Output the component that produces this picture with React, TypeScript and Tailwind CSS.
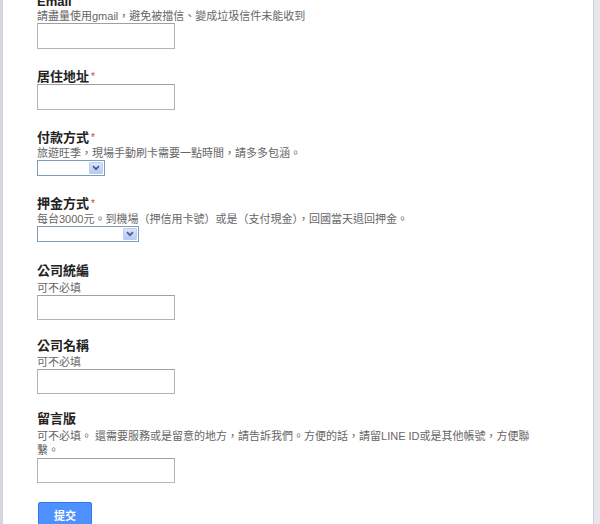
import React from 'react';

const FONT = { fontFamily: '"Liberation Sans", Arial, "Noto Sans CJK TC", sans-serif' };

interface FieldProps {
  label: string;
  required?: boolean;
  help?: string;
  top: string; // margin above the label
  helpTop?: string; // margin between label and help text
  children: React.ReactNode;
}

const Field: React.FC<FieldProps> = ({ label, required, help, top, helpTop = 'mt-[1px]', children }) => (
  <div className={top}>
    <div className="text-[13px] leading-[14px] font-bold text-[#222]">
      {label}
      {required && <span className="ml-[2px] text-[10px] font-normal text-[#c9452b] align-top">*</span>}
    </div>
    {help && <div className={`${helpTop} max-w-[498px] text-[11px] leading-[14px] text-[#666]`}>{help}</div>}
    {children}
  </div>
);

const TextBox = ({ h = 'h-[25px]' }: { h?: string }) => (
  <div className={`w-[138px] ${h} border border-[#b4b4b4] border-t-[#a0a0a0] bg-white`} />
);

const Select = ({ width }: { width: string }) => (
  <div className={`${width} h-[16px] border border-[#7f9db9] bg-white flex justify-end p-[1px]`}>
    <div className="w-[14px] h-full rounded-[1px] border border-[#bccdf3] bg-gradient-to-b from-[#dbe5fb] to-[#b7caf5] flex items-center justify-center">
      <svg width="8" height="6" viewBox="0 0 8 6">
        <path d="M1 1.2 L4 4.2 L7 1.2" fill="none" stroke="#4b5e86" strokeWidth="1.8" />
      </svg>
    </div>
  </div>
);

export default function App() {
  return (
    <div className="flex h-[524px] w-[600px] overflow-hidden bg-white" style={FONT}>
      <div className="w-[3px] shrink-0 bg-[#d6d6de]" />
      <div className="flex-1 pl-[34px]">
        <Field label="Email" help="請盡量使用gmail，避免被擋信、變成垃圾信件未能收到" top="-mt-[5px]" helpTop="mt-0">
          <TextBox h="h-[26px]" />
        </Field>

        <Field label="居住地址" required top="mt-[21px]">
          <TextBox h="h-[26px]" />
        </Field>

        <Field label="付款方式" required help="旅遊旺季，現場手動刷卡需要一點時間，請多多包涵。" top="mt-[21px]">
          <Select width="w-[68px]" />
        </Field>

        <Field label="押金方式" required help="每台3000元。到機場（押信用卡號）或是（支付現金），回國當天退回押金。" top="mt-[21px]">
          <Select width="w-[102px]" />
        </Field>

        <Field label="公司統編" help="可不必填" top="mt-[22px]" helpTop="mt-[3px]">
          <TextBox />
        </Field>

        <Field label="公司名稱" help="可不必填" top="mt-[19px]" helpTop="mt-[2px]">
          <TextBox />
        </Field>

        <Field label="留言版" help="可不必填。 還需要服務或是留意的地方，請告訴我們。方便的話，請留LINE ID或是其他帳號，方便聯繫。" top="mt-[18px]" helpTop="mt-[3px]">
          <div className="mt-[1px]">
            <TextBox />
          </div>
        </Field>

        <button className="mt-[19px] ml-[1px] w-[54px] h-[28px] rounded-[2px] border border-[#3079ed] bg-[#4d90fe] text-[11px] font-bold text-white">
          提交
        </button>
      </div>
      <div className="w-[7px] shrink-0 border-l border-[#d2d2da] bg-[#e6e6ee]" />
    </div>
  );
}
